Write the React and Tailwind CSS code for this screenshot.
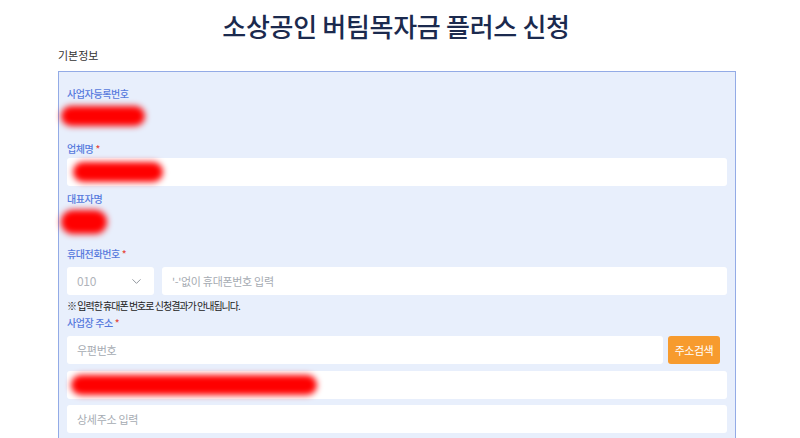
import React from 'react';
import { ChevronDown } from 'lucide-react';

const font = { fontFamily: '"Noto Sans CJK KR", "Noto Sans", sans-serif' };

const Label = ({ children, required }) => (
  <div className="text-[10px] font-medium leading-4 text-[#5679dc] tracking-[-0.4px]">
    {children}
    {required && <span className="text-[#e5483d] ml-[2px]">*</span>}
  </div>
);

const Blob = ({ w, h = 20 }) => (
  <div className={`rounded-full bg-[#ff0000] blur-[3px] ${w} ${h === 20 ? 'h-[20px]' : 'h-[24px]'}`} />
);

const Field = ({ children, className = '' }) => (
  <div className={`h-[28px] bg-white rounded-[3px] flex items-center px-[10px] text-[11px] text-[#a6abb2] tracking-[-0.3px] ${className}`}>
    {children}
  </div>
);

export default function App() {
  return (
    <div className="w-[800px] h-[438px] bg-white overflow-hidden" style={font}>
      <h1 className="text-center text-[26px] font-medium text-[#1b2a4e] leading-none pt-[13px] pr-[8px] tracking-[-0.3px]">
        소상공인 버팀목자금 플러스 신청
      </h1>
      <div className="ml-[58px] mt-[8px] text-[11px] text-[#333] leading-4">기본정보</div>
      <div className="ml-[58px] mt-[8px] w-[678px] border border-[#93abe6] bg-[#e8effc] px-[8px] pt-[14px] pb-[8px]">
        <Label>사업자등록번호</Label>
        <div className="mt-[4px] mb-[15px] -ml-[6px]">
          <Blob w="w-[84px]" />
        </div>
        <Label required>업체명</Label>
        <Field className="mt-[1px]">
          <div className="-ml-[4px]">
            <Blob w="w-[90px]" />
          </div>
        </Field>
        <div className="mt-[5px]">
          <Label>대표자명</Label>
        </div>
        <div className="mt-[3px] mb-[12px] -ml-[6px]">
          <Blob w="w-[46px]" h={24} />
        </div>
        <Label required>휴대전화번호</Label>
        <div className="flex gap-[8px] mt-[5px]">
          <Field className="w-[87px] justify-between">
            <span className="text-[12px] text-[#b0b4ba]">010</span>
            <ChevronDown className="w-[15px] h-[15px] text-[#8a8f96]" strokeWidth={1.5} />
          </Field>
          <Field className="flex-1">'-'없이 휴대폰번호 입력</Field>
        </div>
        <div className="text-[10px] text-[#222] mt-[3px] leading-4 tracking-[-1px]">※ 입력한 휴대폰 번호로 신청결과가 안내됩니다.</div>
        <div className="mt-[1px]">
          <Label required>사업장 주소</Label>
        </div>
        <div className="flex gap-[5px] mt-[5px] pr-[7px]">
          <Field className="flex-1">우편번호</Field>
          <button className="h-[28px] w-[52px] rounded-[3px] bg-[#f79b2e] text-white text-[11px] tracking-[-0.5px]">주소검색</button>
        </div>
        <Field className="mt-[7px]">
          <div className="-ml-[6px]">
            <Blob w="w-[246px]" />
          </div>
        </Field>
        <Field className="mt-[6px]">상세주소 입력</Field>
      </div>
    </div>
  );
}
